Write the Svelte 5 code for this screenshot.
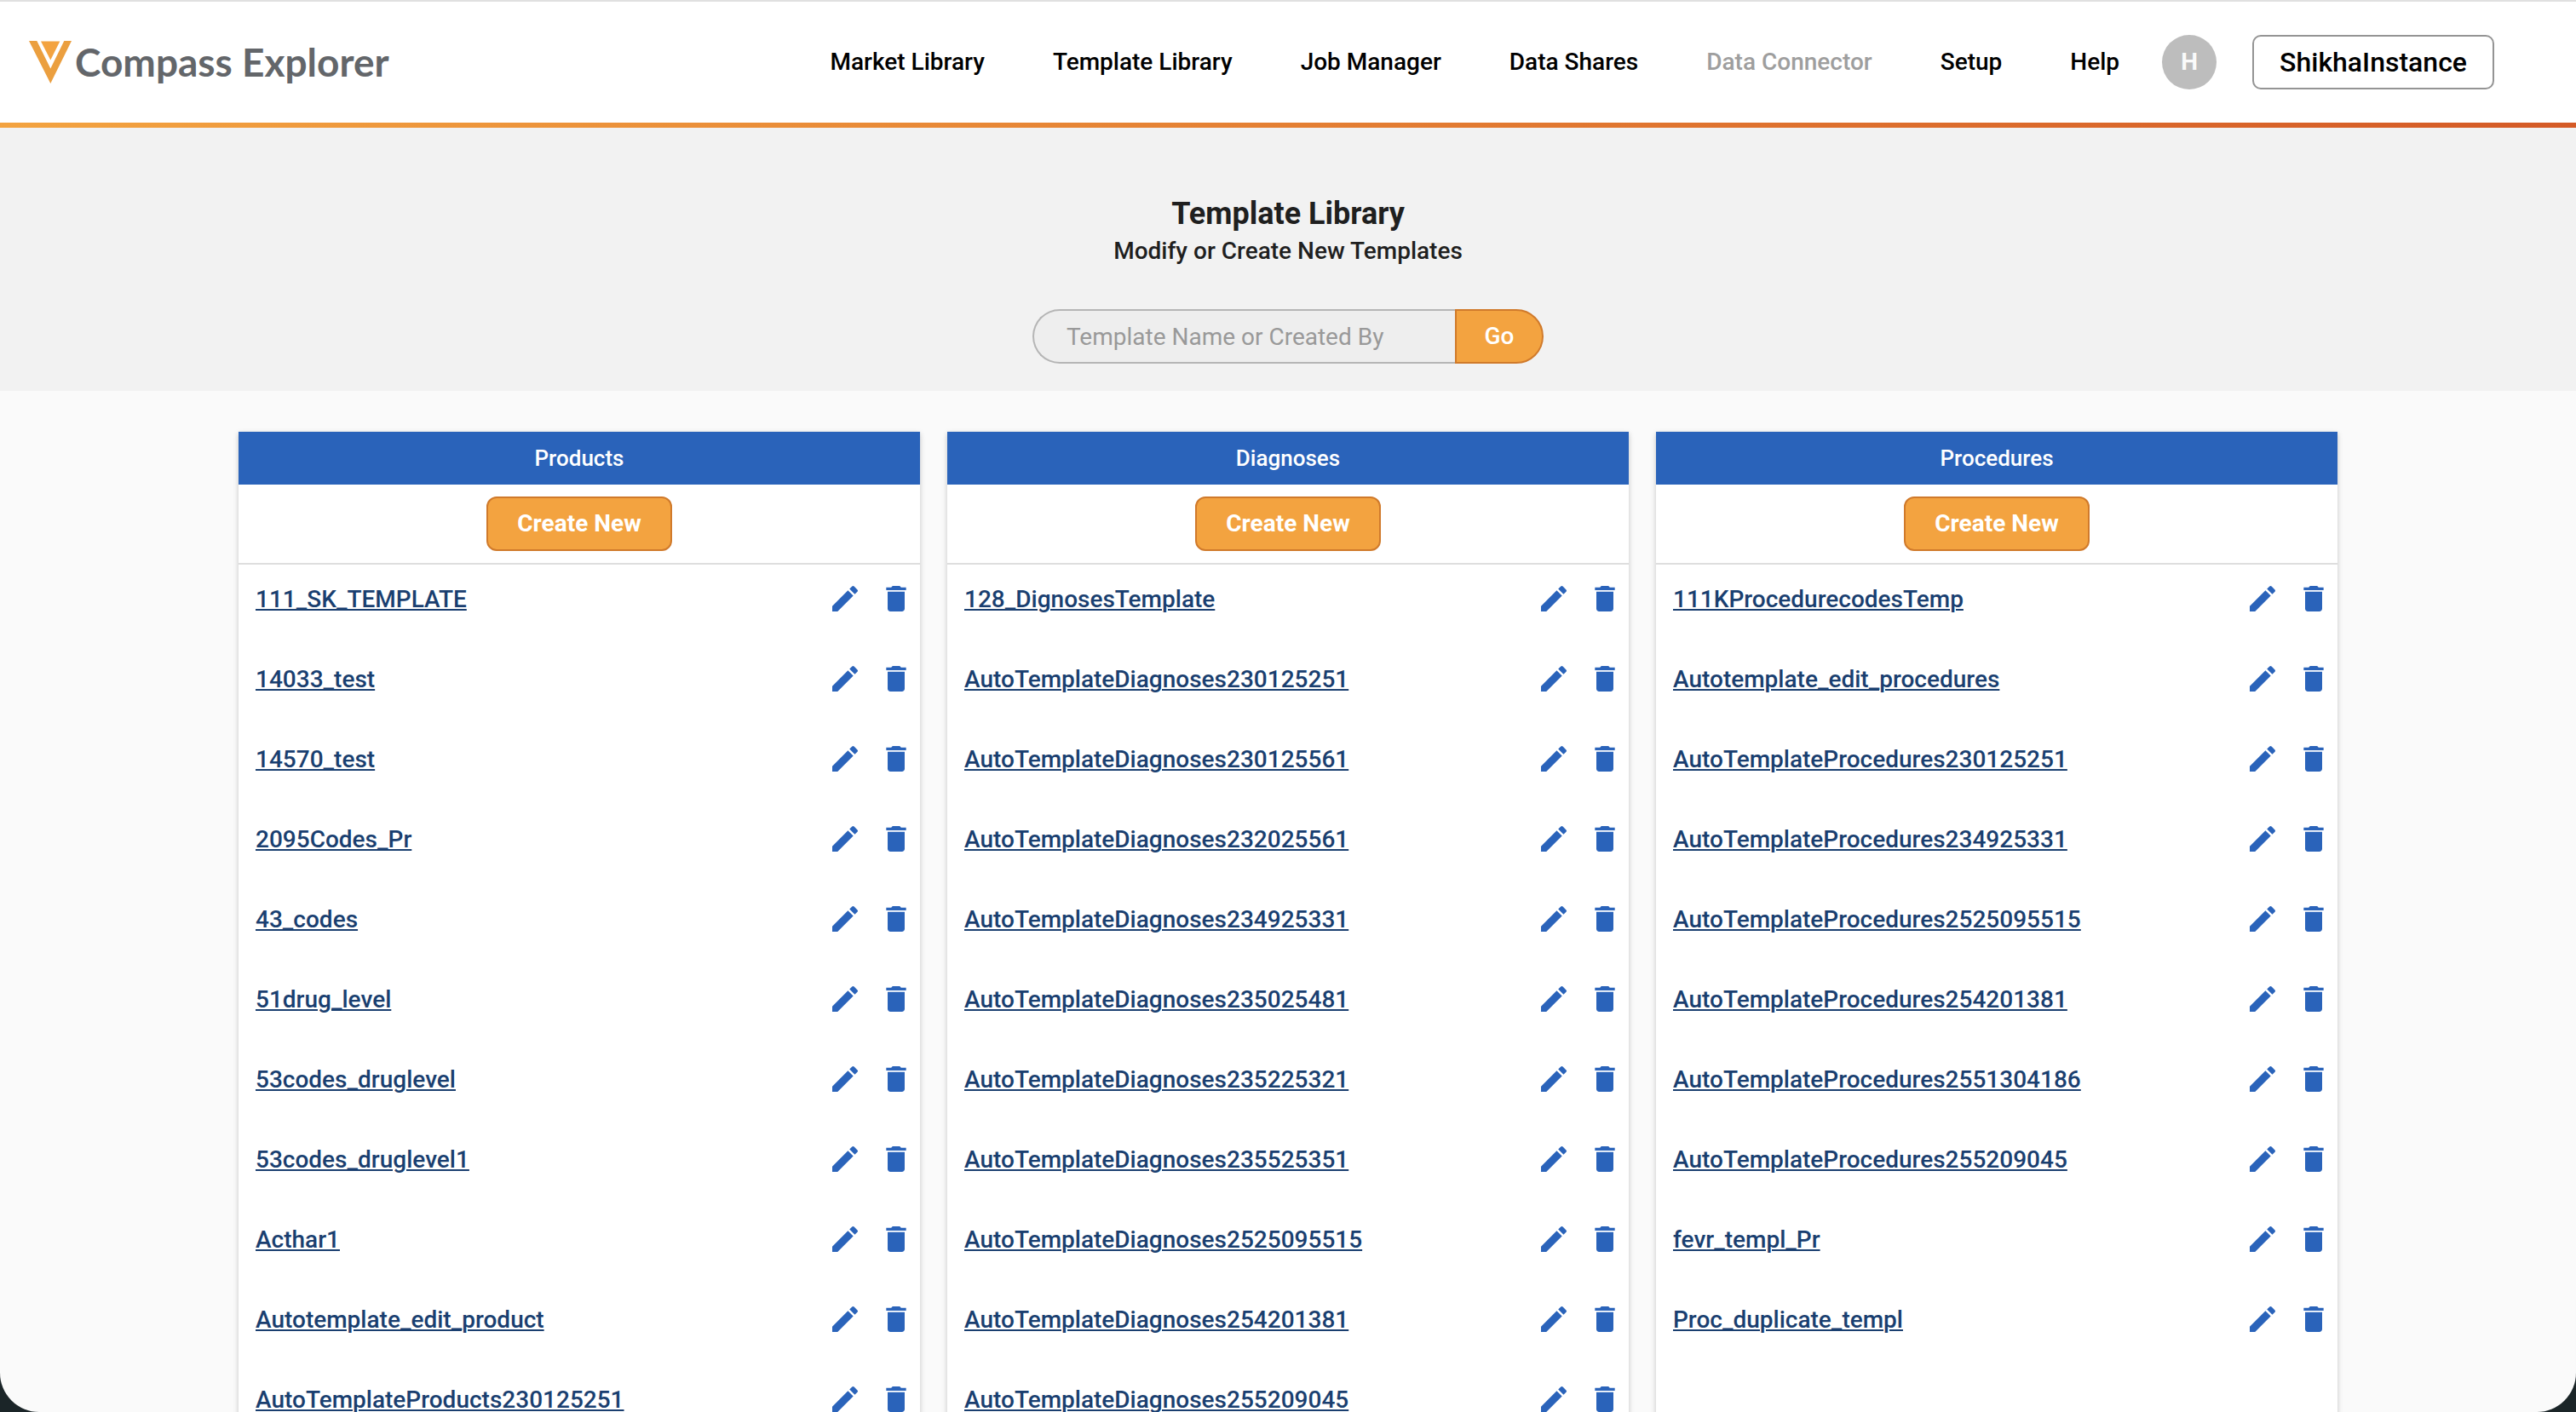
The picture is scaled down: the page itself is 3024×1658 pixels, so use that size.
<script lang="ts">
  type Category = {
    title: string;
    templates: string[];
  };

  const navItems = [
    { label: 'Market Library' },
    { label: 'Template Library' },
    { label: 'Job Manager' },
    { label: 'Data Shares' },
    { label: 'Data Connector', disabled: true },
    { label: 'Setup' },
    { label: 'Help' },
  ];

  const categories: Category[] = [
    {
      title: 'Products',
      templates: [
        '111_SK_TEMPLATE',
        '14033_test',
        '14570_test',
        '2095Codes_Pr',
        '43_codes',
        '51drug_level',
        '53codes_druglevel',
        '53codes_druglevel1',
        'Acthar1',
        'Autotemplate_edit_product',
        'AutoTemplateProducts230125251',
      ],
    },
    {
      title: 'Diagnoses',
      templates: [
        '128_DignosesTemplate',
        'AutoTemplateDiagnoses230125251',
        'AutoTemplateDiagnoses230125561',
        'AutoTemplateDiagnoses232025561',
        'AutoTemplateDiagnoses234925331',
        'AutoTemplateDiagnoses235025481',
        'AutoTemplateDiagnoses235225321',
        'AutoTemplateDiagnoses235525351',
        'AutoTemplateDiagnoses2525095515',
        'AutoTemplateDiagnoses254201381',
        'AutoTemplateDiagnoses255209045',
      ],
    },
    {
      title: 'Procedures',
      templates: [
        '111KProcedurecodesTemp',
        'Autotemplate_edit_procedures',
        'AutoTemplateProcedures230125251',
        'AutoTemplateProcedures234925331',
        'AutoTemplateProcedures2525095515',
        'AutoTemplateProcedures254201381',
        'AutoTemplateProcedures2551304186',
        'AutoTemplateProcedures255209045',
        'fevr_templ_Pr',
        'Proc_duplicate_templ',
      ],
    },
  ];

  let query = $state('');
</script>

<div class="window">
  <header class="topbar">
    <a class="brand" href="#home">
      <svg class="brand-mark" viewBox="0 0 50 50" aria-hidden="true">
        <path d="M0 0h9.3L25.3 32.6 41.3 0H50L25.3 50z" fill="#eb9f3f" />
        <path d="M14 .6h22.3L25.3 22.6z" fill="#f3a340" />
      </svg>
      <span class="brand-name">Compass Explorer</span>
    </a>

    <nav class="nav">
      {#each navItems as item}
        <a class="nav-link" class:disabled={item.disabled} href="#nav">{item.label}</a>
      {/each}
    </nav>

    <button class="avatar" type="button">H</button>
    <button class="instance" type="button">ShikhaInstance</button>
  </header>

  <section class="hero">
    <h1>Template Library</h1>
    <p>Modify or Create New Templates</p>
    <form class="search" onsubmit={(e) => e.preventDefault()}>
      <input
        type="text"
        aria-label="Template Name or Created By"
        placeholder="Template Name or Created By"
        bind:value={query}
      />
      <button type="submit">Go</button>
    </form>
  </section>

  <main class="columns">
    {#each categories as category}
      <section class="card">
        <h2>{category.title}</h2>
        <div class="card-action">
          <button class="create" type="button">Create New</button>
        </div>
        <ul>
          {#each category.templates as name}
            <li>
              <a class="template" href="#template">{name}</a>
              <button class="icon" type="button" aria-label="Edit {name}">
                <svg viewBox="0 0 24 24">
                  <path d="M3 17.25V21h3.75L17.81 9.94l-3.75-3.75L3 17.25zM20.71 7.04a1 1 0 0 0 0-1.41l-2.34-2.34a1 1 0 0 0-1.41 0l-1.83 1.83 3.75 3.75 1.83-1.83z" />
                </svg>
              </button>
              <button class="icon" type="button" aria-label="Delete {name}">
                <svg viewBox="0 0 24 24">
                  <path d="M6 19c0 1.1.9 2 2 2h8c1.1 0 2-.9 2-2V7H6v12zM19 4h-3.5l-1-1h-5l-1 1H5v2h14V4z" />
                </svg>
              </button>
            </li>
          {/each}
        </ul>
      </section>
    {/each}
  </main>
</div>

<style>
  :global(body) {
    background: #1b2528;
  }

  .window {
    height: 100vh;
    box-sizing: border-box;
    overflow-y: auto;
    scrollbar-width: none;
    border-top: 2px solid #e0e0e0;
    border-radius: 0 0 46px 46px;
    background: #fafafa;
    color: #1f1f1f;
    font-family: Roboto, 'Liberation Sans', sans-serif;
    font-size: 28px;
    line-height: 40px;
  }

  button,
  input {
    box-sizing: border-box;
    margin: 0;
    font: inherit;
  }

  button {
    cursor: pointer;
  }

  /* Top bar */
  .topbar {
    display: flex;
    align-items: center;
    height: 142px;
    padding: 0 96px 0 34px;
    background: #fff;
    border-bottom: 6px solid;
    border-image: linear-gradient(90deg, #f3a340, #e0752f 64%, #d45a26) 6;
  }

  .brand {
    display: flex;
    align-items: center;
    gap: 4px;
    text-decoration: none;
  }

  .brand-mark {
    width: 50px;
    height: 50px;
  }

  .brand-name {
    font-family: Lato, sans-serif;
    font-size: 46px;
    font-weight: 700;
    color: #63666a;
    white-space: nowrap;
  }

  .nav {
    display: flex;
    gap: 80px;
    margin-left: auto;
  }

  .nav-link {
    color: #000;
    font-weight: 500;
    text-decoration: none;
    white-space: nowrap;
  }

  .nav-link.disabled {
    color: #9e9e9e;
  }

  .avatar {
    width: 64px;
    height: 64px;
    margin-left: 50px;
    padding: 0;
    border: none;
    border-radius: 50%;
    background: #bdbdbd;
    color: #fafafa;
    font-weight: 700;
  }

  .instance {
    height: 64px;
    margin-left: 42px;
    padding: 0 30px;
    border: 2px solid #949494;
    border-radius: 10px;
    background: #fff;
    color: #000;
    font-size: 32px;
    font-weight: 500;
  }

  /* Title and search */
  .hero {
    display: flex;
    flex-direction: column;
    align-items: center;
    padding: 77px 32px 32px;
    background: #f2f2f2;
  }

  h1 {
    margin: 0;
    font-size: 36px;
    font-weight: 700;
    line-height: 48px;
  }

  .hero p {
    margin: 0;
    font-weight: 500;
  }

  .search {
    display: flex;
    width: 600px;
    margin-top: 48px;
  }

  .search input {
    flex: 1;
    min-width: 0;
    height: 64px;
    padding: 0 38px;
    border: 2px solid #b5b5b5;
    border-right: none;
    border-radius: 32px 0 0 32px;
    background: #eee;
    color: #1f1f1f;
    outline: none;
  }

  .search input::placeholder {
    color: #999;
    opacity: 1;
  }

  .search button {
    width: 104px;
    height: 64px;
    padding: 0;
    border: 2px solid #d07a2b;
    border-radius: 0 32px 32px 0;
    background: #f3a340;
    color: #fff;
    font-weight: 500;
  }

  /* Template columns */
  .columns {
    display: grid;
    grid-template-columns: repeat(3, minmax(0, 800px));
    justify-content: center;
    gap: 32px;
    padding: 48px 32px;
  }

  .card {
    background: #fff;
    box-shadow: 0 2px 6px rgba(0, 0, 0, 0.22);
  }

  h2 {
    margin: 0;
    padding: 11px 0;
    background: #2a63ba;
    color: #fff;
    font-size: 26px;
    font-weight: 500;
    text-align: center;
  }

  .card-action {
    display: flex;
    justify-content: center;
    padding: 14px 0;
    border-bottom: 2px solid #dedede;
  }

  .create {
    height: 64px;
    padding: 0 34px;
    border: 2px solid #d07a2b;
    border-radius: 12px;
    background: #f3a340;
    color: #fff;
    font-weight: 700;
  }

  ul {
    display: flex;
    flex-direction: column;
    gap: 14px;
    margin: 0;
    padding: 0;
    list-style: none;
  }

  li {
    display: flex;
    align-items: center;
    gap: 20px;
    min-height: 80px;
    padding: 0 8px 0 20px;
  }

  .template {
    margin-right: auto;
    padding-top: 2px;
    color: #1a3f70;
    font-weight: 500;
    text-decoration: underline;
    text-decoration-thickness: 2px;
    text-underline-offset: 2px;
  }

  .icon {
    width: 40px;
    height: 40px;
    padding: 0;
    border: none;
    background: none;
  }

  .icon svg {
    display: block;
    fill: #2a63ba;
  }
</style>
